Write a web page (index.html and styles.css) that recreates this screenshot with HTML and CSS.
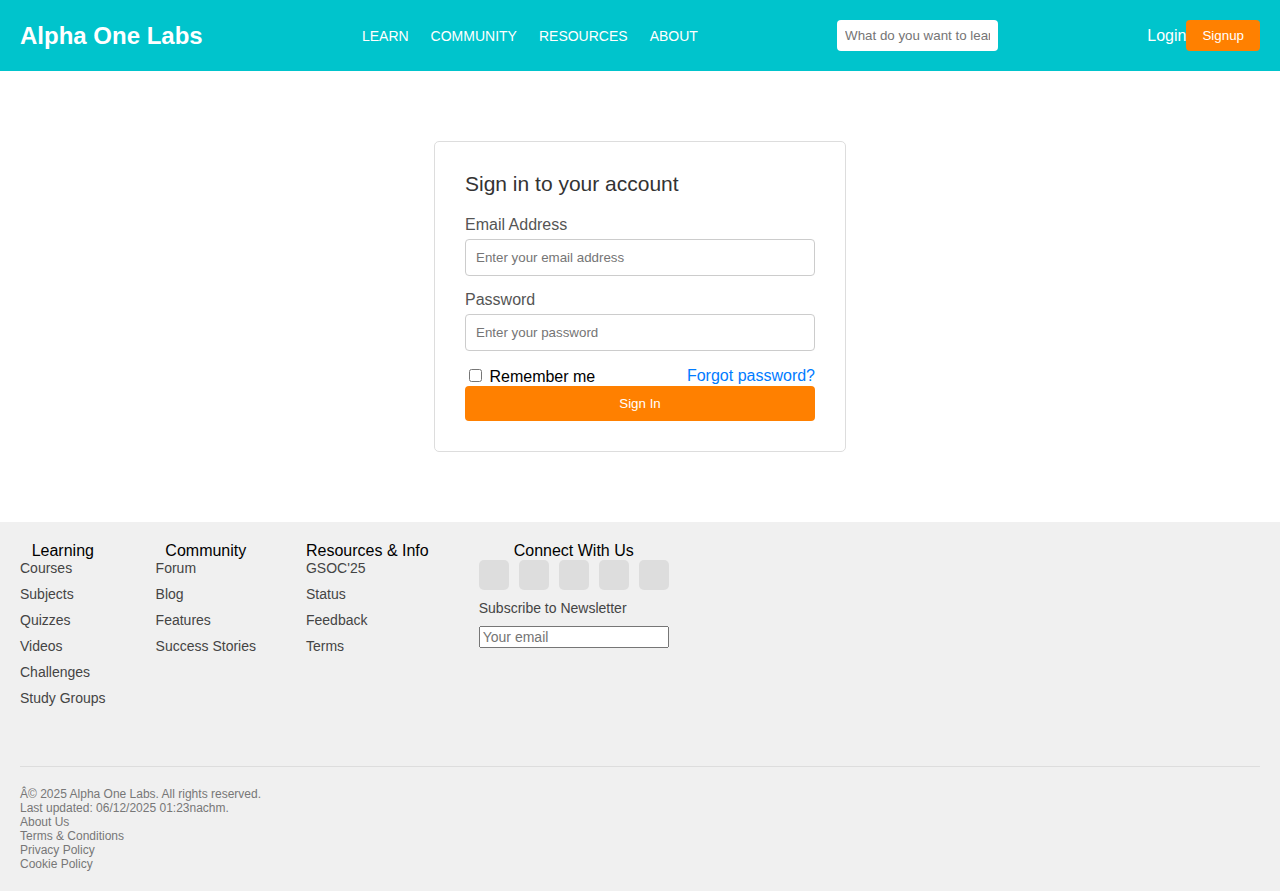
FILE: index.html
```
<!DOCTYPE html>
<html lang="en">
<head>
<meta charset="utf-8">
<title>Alpha One Labs</title>
<link rel="stylesheet" href="styles.css">
</head>
<body>
<header class="header">
  <div class="logo">Alpha One Labs</div>
  <nav class="nav">
    <a href="#">LEARN</a>
    <a href="#">COMMUNITY</a>
    <a href="#">RESOURCES</a>
    <a href="#">ABOUT</a>
  </nav>
  <input class="search" type="text" aria-label="Search" placeholder="What do you want to learn?">
  <div class="account">
    <a class="login" href="#">Login</a>
    <button class="signup" type="button">Signup</button>
  </div>
</header>
<main class="main">
  <form class="card">
    <h1 class="card-title">Sign in to your account</h1>
    <div class="field">
      <label for="email">Email Address</label>
      <input id="email" type="email" placeholder="Enter your email address">
    </div>
    <div class="field">
      <label for="password">Password</label>
      <input id="password" type="password" placeholder="Enter your password">
    </div>
    <div class="options">
      <div><input type="checkbox" id="remember"> <label for="remember">Remember me</label></div>
      <a class="forgot" href="#">Forgot password?</a>
    </div>
    <button class="submit" type="submit">Sign In</button>
  </form>
</main>
<footer class="footer">
  <div class="columns">
    <section class="column">
      <h2 class="column-title">Learning</h2>
      <ul class="links">
        <li><a href="#">Courses</a></li>
        <li><a href="#">Subjects</a></li>
        <li><a href="#">Quizzes</a></li>
        <li><a href="#">Videos</a></li>
        <li><a href="#">Challenges</a></li>
        <li><a href="#">Study Groups</a></li>
      </ul>
    </section>
    <section class="column">
      <h2 class="column-title">Community</h2>
      <ul class="links">
        <li><a href="#">Forum</a></li>
        <li><a href="#">Blog</a></li>
        <li><a href="#">Features</a></li>
        <li><a href="#">Success Stories</a></li>
      </ul>
    </section>
    <section class="column">
      <h2 class="column-title">Resources &amp; Info</h2>
      <ul class="links">
        <li><a href="#">GSOC'25</a></li>
        <li><a href="#">Status</a></li>
        <li><a href="#">Feedback</a></li>
        <li><a href="#">Terms</a></li>
      </ul>
    </section>
    <section class="column">
      <h2 class="column-title">Connect With Us</h2>
      <div class="social">
        <span class="social-icon"></span>
        <span class="social-icon"></span>
        <span class="social-icon"></span>
        <span class="social-icon"></span>
        <span class="social-icon"></span>
      </div>
      <div class="newsletter">
        <label for="newsletter">Subscribe to Newsletter</label>
        <input id="newsletter" type="email" placeholder="Your email">
      </div>
    </section>
  </div>
  <div class="legal">
    <p>Â© 2025 Alpha One Labs. All rights reserved.</p>
    <p>Last updated: 06/12/2025 01:23nachm.</p>
    <a href="#">About Us</a>
    <a href="#">Terms &amp; Conditions</a>
    <a href="#">Privacy Policy</a>
    <a href="#">Cookie Policy</a>
  </div>
</footer>
</body>
</html>
```
FILE: styles.css
```
* {
  box-sizing: border-box;
}

body {
  margin: 0;
  background: #fff;
  color: #000;
  font-family: "Liberation Sans", Arial, sans-serif;
  font-size: 16px;
}

a {
  color: inherit;
  text-decoration: none;
}

button,
input {
  font-family: inherit;
}

.header {
  display: flex;
  justify-content: space-between;
  align-items: center;
  padding: 20px;
  background: #00c4cc;
  color: #fff;
}

.logo {
  font-size: 24px;
  font-weight: bold;
}

.nav {
  display: flex;
  gap: 22px;
  padding-left: 20px;
  font-size: 14px;
}

.search {
  width: 161px;
  margin-right: 10px;
  padding: 8px;
  border: 0;
  border-radius: 4px;
}

.account {
  display: flex;
  align-items: center;
}

.signup {
  padding: 8px 16px;
  border: 0;
  border-radius: 4px;
  background: #ff8000;
  color: #fff;
}

.main {
  display: flex;
  justify-content: center;
  padding: 70px 20px;
}

.card {
  width: 412px;
  padding: 30px;
  border: 1px solid #ddd;
  border-radius: 5px;
}

.card-title {
  margin: 0 0 20px;
  color: #333;
  font-size: 21px;
  font-weight: normal;
  line-height: 24px;
}

.field {
  display: flex;
  flex-direction: column;
  gap: 5px;
  margin-bottom: 15px;
  color: #555;
}

.field input {
  padding: 10px;
  border: 1px solid #ccc;
  border-radius: 4px;
}

.options {
  display: flex;
  justify-content: space-between;
  align-items: center;
}

.forgot {
  color: #007bff;
}

.submit {
  width: 100%;
  padding: 10px;
  border: 0;
  border-radius: 4px;
  background: #ff8000;
  color: #fff;
}

.footer {
  padding: 20px;
  background: #f0f0f0;
}

.columns {
  display: flex;
  gap: 50px;
}

.column-title {
  margin: 0;
  font-size: 16px;
  font-weight: normal;
  line-height: 18px;
  text-align: center;
}

.links {
  margin: 0;
  padding: 0;
  list-style: none;
  color: #444;
  font-size: 14px;
  line-height: 16px;
}

.links li {
  margin-bottom: 10px;
}

.social {
  display: flex;
  gap: 10px;
}

.social-icon {
  width: 30px;
  height: 30px;
  border-radius: 5px;
  background: #ddd;
}

.newsletter {
  display: flex;
  flex-direction: column;
  gap: 10px;
  margin-top: 10px;
  color: #444;
  font-size: 14px;
}

.newsletter input {
  width: 190px;
  font-size: 14px;
}

.legal {
  display: flex;
  flex-direction: column;
  align-items: flex-start;
  margin-top: 50px;
  padding-top: 20px;
  border-top: 1px solid #ddd;
  color: #777;
  font-size: 12px;
  line-height: 14px;
}

.legal p {
  margin: 0;
}
```
